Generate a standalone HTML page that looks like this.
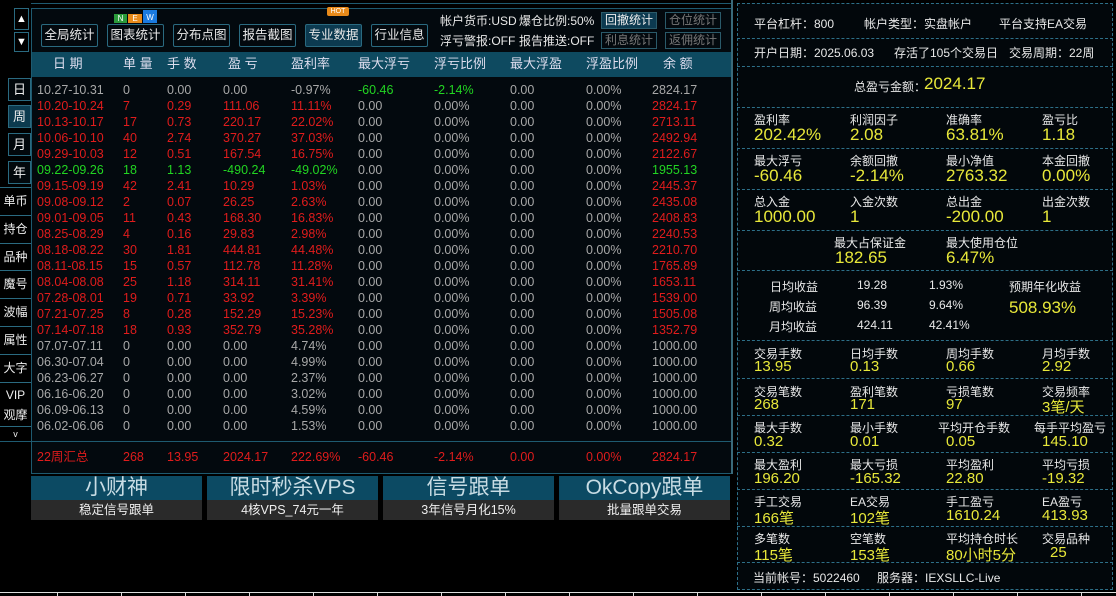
<!DOCTYPE html>
<html><head><meta charset="utf-8">
<style>
*{margin:0;padding:0;box-sizing:border-box}
body{width:1116px;height:596px;background:#000;position:relative;overflow:hidden;font-family:"Liberation Sans","Noto Sans CJK SC",sans-serif;color:#ddd;font-size:12px}
.a{position:absolute;white-space:nowrap}
.btn{position:absolute;border:1px solid #2a6a80;background:#03090e;color:#e8e8e8;font-size:12.5px;text-align:center;line-height:21px;border-radius:2px}
.sbtn{position:absolute;border:1px solid #2a5a6a;color:#eee;font-size:12px;text-align:center;line-height:15px}
.side{position:absolute;left:0;width:31px;border-top:1px solid #2a6a80;color:#eee;font-size:12px;text-align:center;line-height:26px;height:28px}
.box{position:absolute;left:8px;width:23px;height:23px;border:1px solid #2a6a80;color:#eee;text-align:center;line-height:21px;font-size:13px;background:#02080c}
.row{position:absolute;left:37px;display:grid;grid-template-columns:86px 44px 56px 68px 67px 76px 76px 76px 66px 80px;font-size:12.5px;line-height:16px;color:#a8a8a8}
.r{color:#e01c1c}.g{color:#22d522}
.rp{position:absolute;left:737px;width:376px;border-bottom:1px dashed #2d6f88}
.lb{position:absolute;font-size:12px;color:#e8e8e8}
.v{position:absolute;font-size:17px;color:#e8e83a}
.ad{position:absolute;top:476px;width:171px}
.ad .t{height:24px;background:#0c4a63;color:#c8dce4;font-size:21px;line-height:24px;text-align:center}
.ad .s{height:20px;background:#2a2a2a;color:#eee;font-size:12.5px;line-height:20px;text-align:center}
</style></head><body>

<div class="a" style="left:14px;top:8px;width:15px;height:22px;border:1px solid #2a6a80;color:#fff;font-size:11px;text-align:center;line-height:20px">▲</div>
<div class="a" style="left:14px;top:32px;width:15px;height:20px;border:1px solid #2a6a80;color:#fff;font-size:11px;text-align:center;line-height:18px">▼</div>
<div class="box" style="top:78px">日</div>
<div class="box" style="top:105px;background:#0c3a4e">周</div>
<div class="box" style="top:133px">月</div>
<div class="box" style="top:161px">年</div>
<div class="side" style="top:187px">单币</div>
<div class="side" style="top:215px">持仓</div>
<div class="side" style="top:243px">品种</div>
<div class="side" style="top:270px">魔号</div>
<div class="side" style="top:298px">波幅</div>
<div class="side" style="top:326px">属性</div>
<div class="side" style="top:354px">大字</div>
<div class="side" style="top:382px;height:22px;line-height:24px">VIP</div>
<div class="side" style="top:404px;height:22px;border-top:none;line-height:22px">观摩</div>
<div class="side" style="top:426px;height:14px;font-size:9px;line-height:14px">v</div>

<div class="a" style="left:31px;top:3px;width:701px;height:1px;background:#1e5a70"></div>
<div class="a" style="left:31px;top:8px;width:701px;height:466px;border:1px solid #1e5a70;background:#03090e"></div>
<div class="a" style="left:32px;top:52px;width:699px;height:25px;background:#0e4a60"></div>
<div class="a" style="left:0;top:441px;width:731px;height:1px;background:#1e5a70"></div>
<div class="a" style="left:731px;top:0;width:2px;height:474px;background:#3a6a7a"></div>

<div class="btn" style="left:41px;top:24px;width:57px;height:23px">全局统计</div>
<div class="btn" style="left:107px;top:24px;width:57px;height:23px">图表统计</div>
<div class="btn" style="left:173px;top:24px;width:57px;height:23px">分布点图</div>
<div class="btn" style="left:239px;top:24px;width:57px;height:23px">报告截图</div>
<div class="btn" style="left:305px;top:24px;width:57px;height:23px;background:#0c3a50">专业数据</div>
<div class="btn" style="left:371px;top:24px;width:57px;height:23px">行业信息</div>
<div class="a" style="left:114px;top:14px;width:13px;height:9px;background:#2a9a3a;color:#fff;font-size:8px;text-align:center;line-height:9px">N</div>
<div class="a" style="left:128px;top:14px;width:14px;height:9px;background:#e88a1a;color:#fff;font-size:8px;text-align:center;line-height:9px">E</div>
<div class="a" style="left:143px;top:10px;width:14px;height:13px;background:#1a7ae0;color:#fff;font-size:8px;text-align:center;line-height:16px">W</div>
<div class="a" style="left:327px;top:7px;width:22px;height:9px;background:#e88a1a;color:#fff;font-size:7px;text-align:center;line-height:9px;border-radius:2px">HOT</div>
<div class="a" style="left:440px;top:12px;font-size:12px;color:#e8e8e8">帐户货币:USD</div>
<div class="a" style="left:519px;top:12px;font-size:12px;color:#e8e8e8">爆仓比例:50%</div>
<div class="a" style="left:440px;top:32px;font-size:12px;color:#e8e8e8">浮亏警报:OFF</div>
<div class="a" style="left:519px;top:32px;font-size:12px;color:#e8e8e8">报告推送:OFF</div>
<div class="sbtn" style="left:601px;top:12px;width:56px;height:17px;background:#0c3a50">回撤统计</div>
<div class="sbtn" style="left:665px;top:12px;width:56px;height:17px;color:#777">仓位统计</div>
<div class="sbtn" style="left:601px;top:32px;width:56px;height:17px;color:#777">利息统计</div>
<div class="sbtn" style="left:665px;top:32px;width:56px;height:17px;color:#777">返佣统计</div>

<div class="row" style="top:56px;color:#dde;font-size:13px"><span style="padding-left:16px">日 期</span><span>单 量</span><span>手 数</span><span style="padding-left:5px">盈 亏</span><span>盈利率</span><span>最大浮亏</span><span>浮亏比例</span><span>最大浮盈</span><span>浮盈比例</span><span style="padding-left:11px">余 额</span></div>

<div class="row" style="top:82px"><span>10.27-10.31</span><span>0</span><span>0.00</span><span>0.00</span><span>-0.97%</span><span class="g">-60.46</span><span class="g">-2.14%</span><span>0.00</span><span>0.00%</span><span>2824.17</span></div>
<div class="row" style="top:98px"><span class="r">10.20-10.24</span><span class="r">7</span><span class="r">0.29</span><span class="r">111.06</span><span class="r">11.11%</span><span>0.00</span><span>0.00%</span><span>0.00</span><span>0.00%</span><span class="r">2824.17</span></div>
<div class="row" style="top:114px"><span class="r">10.13-10.17</span><span class="r">17</span><span class="r">0.73</span><span class="r">220.17</span><span class="r">22.02%</span><span>0.00</span><span>0.00%</span><span>0.00</span><span>0.00%</span><span class="r">2713.11</span></div>
<div class="row" style="top:130px"><span class="r">10.06-10.10</span><span class="r">40</span><span class="r">2.74</span><span class="r">370.27</span><span class="r">37.03%</span><span>0.00</span><span>0.00%</span><span>0.00</span><span>0.00%</span><span class="r">2492.94</span></div>
<div class="row" style="top:146px"><span class="r">09.29-10.03</span><span class="r">12</span><span class="r">0.51</span><span class="r">167.54</span><span class="r">16.75%</span><span>0.00</span><span>0.00%</span><span>0.00</span><span>0.00%</span><span class="r">2122.67</span></div>
<div class="row" style="top:162px"><span class="g">09.22-09.26</span><span class="g">18</span><span class="g">1.13</span><span class="g">-490.24</span><span class="g">-49.02%</span><span>0.00</span><span>0.00%</span><span>0.00</span><span>0.00%</span><span class="g">1955.13</span></div>
<div class="row" style="top:178px"><span class="r">09.15-09.19</span><span class="r">42</span><span class="r">2.41</span><span class="r">10.29</span><span class="r">1.03%</span><span>0.00</span><span>0.00%</span><span>0.00</span><span>0.00%</span><span class="r">2445.37</span></div>
<div class="row" style="top:194px"><span class="r">09.08-09.12</span><span class="r">2</span><span class="r">0.07</span><span class="r">26.25</span><span class="r">2.63%</span><span>0.00</span><span>0.00%</span><span>0.00</span><span>0.00%</span><span class="r">2435.08</span></div>
<div class="row" style="top:210px"><span class="r">09.01-09.05</span><span class="r">11</span><span class="r">0.43</span><span class="r">168.30</span><span class="r">16.83%</span><span>0.00</span><span>0.00%</span><span>0.00</span><span>0.00%</span><span class="r">2408.83</span></div>
<div class="row" style="top:226px"><span class="r">08.25-08.29</span><span class="r">4</span><span class="r">0.16</span><span class="r">29.83</span><span class="r">2.98%</span><span>0.00</span><span>0.00%</span><span>0.00</span><span>0.00%</span><span class="r">2240.53</span></div>
<div class="row" style="top:242px"><span class="r">08.18-08.22</span><span class="r">30</span><span class="r">1.81</span><span class="r">444.81</span><span class="r">44.48%</span><span>0.00</span><span>0.00%</span><span>0.00</span><span>0.00%</span><span class="r">2210.70</span></div>
<div class="row" style="top:258px"><span class="r">08.11-08.15</span><span class="r">15</span><span class="r">0.57</span><span class="r">112.78</span><span class="r">11.28%</span><span>0.00</span><span>0.00%</span><span>0.00</span><span>0.00%</span><span class="r">1765.89</span></div>
<div class="row" style="top:274px"><span class="r">08.04-08.08</span><span class="r">25</span><span class="r">1.18</span><span class="r">314.11</span><span class="r">31.41%</span><span>0.00</span><span>0.00%</span><span>0.00</span><span>0.00%</span><span class="r">1653.11</span></div>
<div class="row" style="top:290px"><span class="r">07.28-08.01</span><span class="r">19</span><span class="r">0.71</span><span class="r">33.92</span><span class="r">3.39%</span><span>0.00</span><span>0.00%</span><span>0.00</span><span>0.00%</span><span class="r">1539.00</span></div>
<div class="row" style="top:306px"><span class="r">07.21-07.25</span><span class="r">8</span><span class="r">0.28</span><span class="r">152.29</span><span class="r">15.23%</span><span>0.00</span><span>0.00%</span><span>0.00</span><span>0.00%</span><span class="r">1505.08</span></div>
<div class="row" style="top:322px"><span class="r">07.14-07.18</span><span class="r">18</span><span class="r">0.93</span><span class="r">352.79</span><span class="r">35.28%</span><span>0.00</span><span>0.00%</span><span>0.00</span><span>0.00%</span><span class="r">1352.79</span></div>
<div class="row" style="top:338px"><span>07.07-07.11</span><span>0</span><span>0.00</span><span>0.00</span><span>4.74%</span><span>0.00</span><span>0.00%</span><span>0.00</span><span>0.00%</span><span>1000.00</span></div>
<div class="row" style="top:354px"><span>06.30-07.04</span><span>0</span><span>0.00</span><span>0.00</span><span>4.99%</span><span>0.00</span><span>0.00%</span><span>0.00</span><span>0.00%</span><span>1000.00</span></div>
<div class="row" style="top:370px"><span>06.23-06.27</span><span>0</span><span>0.00</span><span>0.00</span><span>2.37%</span><span>0.00</span><span>0.00%</span><span>0.00</span><span>0.00%</span><span>1000.00</span></div>
<div class="row" style="top:386px"><span>06.16-06.20</span><span>0</span><span>0.00</span><span>0.00</span><span>3.02%</span><span>0.00</span><span>0.00%</span><span>0.00</span><span>0.00%</span><span>1000.00</span></div>
<div class="row" style="top:402px"><span>06.09-06.13</span><span>0</span><span>0.00</span><span>0.00</span><span>4.59%</span><span>0.00</span><span>0.00%</span><span>0.00</span><span>0.00%</span><span>1000.00</span></div>
<div class="row" style="top:418px"><span>06.02-06.06</span><span>0</span><span>0.00</span><span>0.00</span><span>1.53%</span><span>0.00</span><span>0.00%</span><span>0.00</span><span>0.00%</span><span>1000.00</span></div>
<div class="row" style="top:449px;color:#e01c1c"><span>22周汇总</span><span>268</span><span>13.95</span><span>2024.17</span><span>222.69%</span><span>-60.46</span><span>-2.14%</span><span>0.00</span><span>0.00%</span><span>2824.17</span></div>

<div class="ad" style="left:31px"><div class="t">小财神</div><div class="s">稳定信号跟单</div></div>
<div class="ad" style="left:207px"><div class="t">限时秒杀VPS</div><div class="s">4核VPS_74元一年</div></div>
<div class="ad" style="left:383px"><div class="t">信号跟单</div><div class="s">3年信号月化15%</div></div>
<div class="ad" style="left:559px"><div class="t">OkCopy跟单</div><div class="s">批量跟单交易</div></div>

<div class="a" style="left:0;top:592px;width:1116px;height:1px;background:#ddd"></div>
<div class="a" style="left:57px;top:592px;width:1px;height:4px;background:#ddd"></div>
<div class="a" style="left:121px;top:592px;width:1px;height:4px;background:#ddd"></div>
<div class="a" style="left:185px;top:592px;width:1px;height:4px;background:#ddd"></div>
<div class="a" style="left:249px;top:592px;width:1px;height:4px;background:#ddd"></div>
<div class="a" style="left:313px;top:592px;width:1px;height:4px;background:#ddd"></div>
<div class="a" style="left:377px;top:592px;width:1px;height:4px;background:#ddd"></div>
<div class="a" style="left:441px;top:592px;width:1px;height:4px;background:#ddd"></div>
<div class="a" style="left:505px;top:592px;width:1px;height:4px;background:#ddd"></div>
<div class="a" style="left:569px;top:592px;width:1px;height:4px;background:#ddd"></div>
<div class="a" style="left:633px;top:592px;width:1px;height:4px;background:#ddd"></div>
<div class="a" style="left:697px;top:592px;width:1px;height:4px;background:#ddd"></div>
<div class="a" style="left:761px;top:592px;width:1px;height:4px;background:#ddd"></div>
<div class="a" style="left:825px;top:592px;width:1px;height:4px;background:#ddd"></div>
<div class="a" style="left:889px;top:592px;width:1px;height:4px;background:#ddd"></div>
<div class="a" style="left:953px;top:592px;width:1px;height:4px;background:#ddd"></div>
<div class="a" style="left:1017px;top:592px;width:1px;height:4px;background:#ddd"></div>
<div class="a" style="left:1081px;top:592px;width:1px;height:4px;background:#ddd"></div>

<div class="a" style="left:737px;top:3px;width:376px;height:587px;border:1px dashed #2d6f88;background:#02070b"></div>
<div class="rp" style="top:38px"></div>
<div class="rp" style="top:66px"></div>
<div class="rp" style="top:107px"></div>
<div class="rp" style="top:148px"></div>
<div class="rp" style="top:189px"></div>
<div class="rp" style="top:230px"></div>
<div class="rp" style="top:270px"></div>
<div class="rp" style="top:340px"></div>
<div class="rp" style="top:378px"></div>
<div class="rp" style="top:415px"></div>
<div class="rp" style="top:452px"></div>
<div class="rp" style="top:489px"></div>
<div class="rp" style="top:526px"></div>
<div class="rp" style="top:562px"></div>

<div class="lb" style="left:754px;top:15px">平台杠杆：800</div>
<div class="lb" style="left:864px;top:15px">帐户类型：实盘帐户</div>
<div class="lb" style="left:999px;top:15px">平台支持EA交易</div>
<div class="lb" style="left:754px;top:44px">开户日期：2025.06.03</div>
<div class="lb" style="left:894px;top:44px">存活了105个交易日</div>
<div class="lb" style="left:1009px;top:44px">交易周期：22周</div>
<div class="lb" style="left:854px;top:78px">总盈亏金额：</div>
<div class="v" style="left:924px;top:74px">2024.17</div>

<div class="lb" style="left:754px;top:111px">盈利率</div><div class="v" style="left:754px;top:125px">202.42%</div>
<div class="lb" style="left:850px;top:111px">利润因子</div><div class="v" style="left:850px;top:125px">2.08</div>
<div class="lb" style="left:946px;top:111px">准确率</div><div class="v" style="left:946px;top:125px">63.81%</div>
<div class="lb" style="left:1042px;top:111px">盈亏比</div><div class="v" style="left:1042px;top:125px">1.18</div>

<div class="lb" style="left:754px;top:152px">最大浮亏</div><div class="v" style="left:754px;top:166px">-60.46</div>
<div class="lb" style="left:850px;top:152px">余额回撤</div><div class="v" style="left:850px;top:166px">-2.14%</div>
<div class="lb" style="left:946px;top:152px">最小净值</div><div class="v" style="left:946px;top:166px">2763.32</div>
<div class="lb" style="left:1042px;top:152px">本金回撤</div><div class="v" style="left:1042px;top:166px">0.00%</div>

<div class="lb" style="left:754px;top:193px">总入金</div><div class="v" style="left:754px;top:207px">1000.00</div>
<div class="lb" style="left:850px;top:193px">入金次数</div><div class="v" style="left:850px;top:207px">1</div>
<div class="lb" style="left:946px;top:193px">总出金</div><div class="v" style="left:946px;top:207px">-200.00</div>
<div class="lb" style="left:1042px;top:193px">出金次数</div><div class="v" style="left:1042px;top:207px">1</div>

<div class="lb" style="left:834px;top:234px">最大占保证金</div><div class="v" style="left:835px;top:248px">182.65</div>
<div class="lb" style="left:946px;top:234px">最大使用仓位</div><div class="v" style="left:946px;top:248px">6.47%</div>

<div class="lb" style="left:770px;top:278px">日均收益</div><div class="lb" style="left:857px;top:278px">19.28</div><div class="lb" style="left:929px;top:278px">1.93%</div>
<div class="lb" style="left:769px;top:298px">周均收益</div><div class="lb" style="left:857px;top:298px">96.39</div><div class="lb" style="left:929px;top:298px">9.64%</div>
<div class="lb" style="left:769px;top:318px">月均收益</div><div class="lb" style="left:857px;top:318px">424.11</div><div class="lb" style="left:929px;top:318px">42.41%</div>
<div class="lb" style="left:1009px;top:278px">预期年化收益</div><div class="v" style="left:1009px;top:298px">508.93%</div>

<div class="lb" style="left:754px;top:345px">交易手数</div><div class="v" style="left:754px;top:358px;font-size:15px">13.95</div>
<div class="lb" style="left:850px;top:345px">日均手数</div><div class="v" style="left:850px;top:358px;font-size:15px">0.13</div>
<div class="lb" style="left:946px;top:345px">周均手数</div><div class="v" style="left:946px;top:358px;font-size:15px">0.66</div>
<div class="lb" style="left:1042px;top:345px">月均手数</div><div class="v" style="left:1042px;top:358px;font-size:15px">2.92</div>

<div class="lb" style="left:754px;top:383px">交易笔数</div><div class="v" style="left:754px;top:396px;font-size:15px">268</div>
<div class="lb" style="left:850px;top:383px">盈利笔数</div><div class="v" style="left:850px;top:396px;font-size:15px">171</div>
<div class="lb" style="left:946px;top:383px">亏损笔数</div><div class="v" style="left:946px;top:396px;font-size:15px">97</div>
<div class="lb" style="left:1042px;top:383px">交易频率</div><div class="v" style="left:1042px;top:396px;font-size:15px">3笔/天</div>

<div class="lb" style="left:754px;top:419px">最大手数</div><div class="v" style="left:754px;top:433px;font-size:15px">0.32</div>
<div class="lb" style="left:850px;top:419px">最小手数</div><div class="v" style="left:850px;top:433px;font-size:15px">0.01</div>
<div class="lb" style="left:938px;top:419px">平均开仓手数</div><div class="v" style="left:946px;top:433px;font-size:15px">0.05</div>
<div class="lb" style="left:1034px;top:419px">每手平均盈亏</div><div class="v" style="left:1042px;top:433px;font-size:15px">145.10</div>

<div class="lb" style="left:754px;top:456px">最大盈利</div><div class="v" style="left:754px;top:470px;font-size:15px">196.20</div>
<div class="lb" style="left:850px;top:456px">最大亏损</div><div class="v" style="left:850px;top:470px;font-size:15px">-165.32</div>
<div class="lb" style="left:946px;top:456px">平均盈利</div><div class="v" style="left:946px;top:470px;font-size:15px">22.80</div>
<div class="lb" style="left:1042px;top:456px">平均亏损</div><div class="v" style="left:1042px;top:470px;font-size:15px">-19.32</div>

<div class="lb" style="left:754px;top:493px">手工交易</div><div class="v" style="left:754px;top:507px;font-size:15px">166笔</div>
<div class="lb" style="left:850px;top:493px">EA交易</div><div class="v" style="left:850px;top:507px;font-size:15px">102笔</div>
<div class="lb" style="left:946px;top:493px">手工盈亏</div><div class="v" style="left:946px;top:507px;font-size:15px">1610.24</div>
<div class="lb" style="left:1042px;top:493px">EA盈亏</div><div class="v" style="left:1042px;top:507px;font-size:15px">413.93</div>

<div class="lb" style="left:754px;top:530px">多笔数</div><div class="v" style="left:754px;top:544px;font-size:15px">115笔</div>
<div class="lb" style="left:850px;top:530px">空笔数</div><div class="v" style="left:850px;top:544px;font-size:15px">153笔</div>
<div class="lb" style="left:946px;top:530px">平均持仓时长</div><div class="v" style="left:946px;top:544px;font-size:15px">80小时5分</div>
<div class="lb" style="left:1042px;top:530px">交易品种</div><div class="v" style="left:1050px;top:544px;font-size:15px">25</div>

<div class="lb" style="left:753px;top:569px">当前帐号：5022460</div>
<div class="lb" style="left:877px;top:569px">服务器：IEXSLLC-Live</div>

</body></html>
